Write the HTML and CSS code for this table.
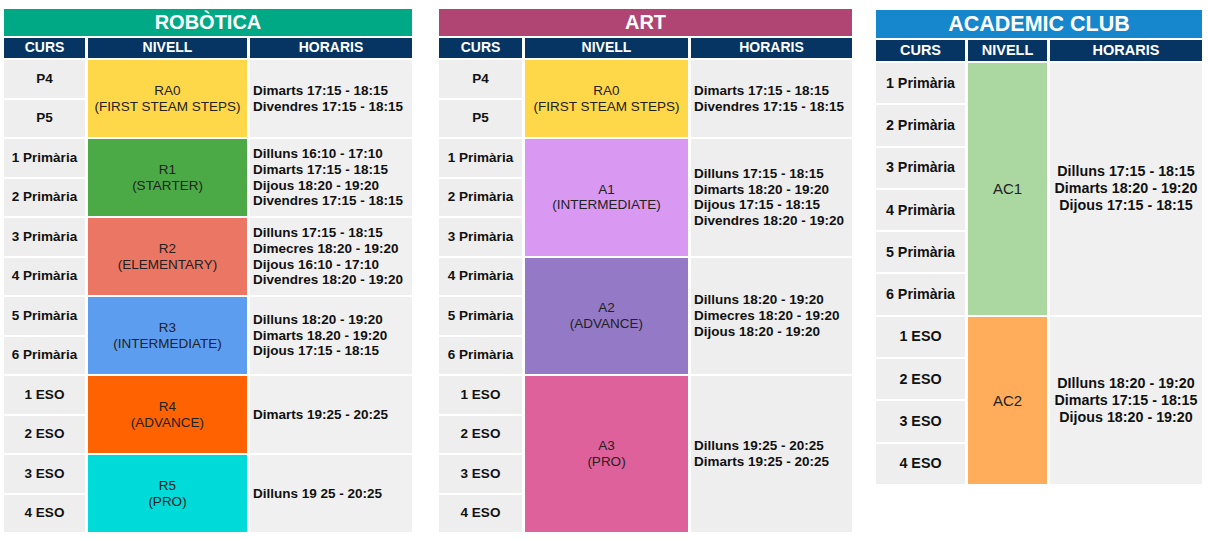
FILE: index.html
```html
<!DOCTYPE html>
<html lang="ca">
<head>
  <meta charset="UTF-8">
  <title>Horaris extraescolars</title>
  <link rel="stylesheet" href="styles.css">
</head>
<body>
  <div class="pagina">

    <!-- ROBÒTICA -->
    <section class="quadre robotica">
      <h2 class="titol">ROBÒTICA</h2>
      <div class="graella">
        <div class="cap">CURS</div>
        <div class="cap">NIVELL</div>
        <div class="cap">HORARIS</div>

        <div class="curs">P4</div>
        <div class="nivell span-2 groc">RA0<br>(FIRST STEAM STEPS)</div>
        <div class="horaris span-2">Dimarts 17:15 - 18:15<br>Divendres 17:15 - 18:15</div>
        <div class="curs">P5</div>

        <div class="curs">1 Primària</div>
        <div class="nivell span-2 verd">R1<br>(STARTER)</div>
        <div class="horaris span-2">Dilluns 16:10 - 17:10<br>Dimarts 17:15 - 18:15<br>Dijous 18:20 - 19:20<br>Divendres 17:15 - 18:15</div>
        <div class="curs">2 Primària</div>

        <div class="curs">3 Primària</div>
        <div class="nivell span-2 salmo">R2<br>(ELEMENTARY)</div>
        <div class="horaris span-2">Dilluns 17:15 - 18:15<br>Dimecres 18:20 - 19:20<br>Dijous 16:10 - 17:10<br>Divendres 18:20 - 19:20</div>
        <div class="curs">4 Primària</div>

        <div class="curs">5 Primària</div>
        <div class="nivell span-2 blau">R3<br>(INTERMEDIATE)</div>
        <div class="horaris span-2">Dilluns 18:20 - 19:20<br>Dimarts 18.20 - 19:20<br>Dijous 17:15 - 18:15</div>
        <div class="curs">6 Primària</div>

        <div class="curs">1 ESO</div>
        <div class="nivell span-2 taronja">R4<br>(ADVANCE)</div>
        <div class="horaris span-2">Dimarts 19:25 - 20:25</div>
        <div class="curs">2 ESO</div>

        <div class="curs">3 ESO</div>
        <div class="nivell span-2 cian">R5<br>(PRO)</div>
        <div class="horaris span-2">Dilluns 19 25 - 20:25</div>
        <div class="curs">4 ESO</div>
      </div>
    </section>

    <!-- ART -->
    <section class="quadre art">
      <h2 class="titol">ART</h2>
      <div class="graella">
        <div class="cap">CURS</div>
        <div class="cap">NIVELL</div>
        <div class="cap">HORARIS</div>

        <div class="curs">P4</div>
        <div class="nivell span-2 groc">RA0<br>(FIRST STEAM STEPS)</div>
        <div class="horaris span-2">Dimarts 17:15 - 18:15<br>Divendres 17:15 - 18:15</div>
        <div class="curs">P5</div>

        <div class="curs">1 Primària</div>
        <div class="nivell span-3 lila">A1<br>(INTERMEDIATE)</div>
        <div class="horaris span-3">Dilluns 17:15 - 18:15<br>Dimarts 18:20 - 19:20<br>Dijous 17:15 - 18:15<br>Divendres 18:20 - 19:20</div>
        <div class="curs">2 Primària</div>
        <div class="curs">3 Primària</div>

        <div class="curs">4 Primària</div>
        <div class="nivell span-3 morat">A2<br>(ADVANCE)</div>
        <div class="horaris span-3">Dilluns 18:20 - 19:20<br>Dimecres 18:20 - 19:20<br>Dijous 18:20 - 19:20</div>
        <div class="curs">5 Primària</div>
        <div class="curs">6 Primària</div>

        <div class="curs">1 ESO</div>
        <div class="nivell span-4 rosa">A3<br>(PRO)</div>
        <div class="horaris span-4">Dilluns 19:25 - 20:25<br>Dimarts 19:25 - 20:25</div>
        <div class="curs">2 ESO</div>
        <div class="curs">3 ESO</div>
        <div class="curs">4 ESO</div>
      </div>
    </section>

    <!-- ACADEMIC CLUB -->
    <section class="quadre academic">
      <h2 class="titol">ACADEMIC CLUB</h2>
      <div class="graella">
        <div class="cap">CURS</div>
        <div class="cap">NIVELL</div>
        <div class="cap">HORARIS</div>

        <div class="curs">1 Primària</div>
        <div class="nivell span-6 verd-clar">AC1</div>
        <div class="horaris span-6">Dilluns 17:15 - 18:15<br>Dimarts 18:20 - 19:20<br>Dijous 17:15 - 18:15</div>
        <div class="curs">2 Primària</div>
        <div class="curs">3 Primària</div>
        <div class="curs">4 Primària</div>
        <div class="curs">5 Primària</div>
        <div class="curs">6 Primària</div>

        <div class="curs">1 ESO</div>
        <div class="nivell span-4 preseg">AC2</div>
        <div class="horaris span-4">DIlluns 18:20 - 19:20<br>Dimarts 17:15 - 18:15<br>Dijous 18:20 - 19:20</div>
        <div class="curs">2 ESO</div>
        <div class="curs">3 ESO</div>
        <div class="curs">4 ESO</div>
      </div>
    </section>

  </div>
</body>
</html>
```

FILE: styles.css
```css
body {
  margin: 0;
  background-color: #ffffff;
  font-family: 'Liberation Sans', Arial, sans-serif;
  color: #111111;
}

.pagina {
  display: flex;
  align-items: flex-start;
  padding: 9px 0 0 4px;
}

.quadre {
  display: flex;
  flex-direction: column;
  gap: 2px;
}

.titol {
  margin: 0;
  height: 27px;
  display: flex;
  align-items: center;
  justify-content: center;
  color: #ffffff;
  font-size: 20px;
  font-weight: bold;
}

.graella {
  display: grid;
  column-gap: 3px;
  row-gap: 2px;
  font-size: 13.5px;
  line-height: 15.6px;
}

.cap {
  background-color: #063563;
  color: #ffffff;
  font-weight: bold;
  font-size: 14px;
  display: flex;
  align-items: center;
  justify-content: center;
}

.curs {
  grid-column: 1;
  background-color: #eeeeee;
  font-weight: bold;
  display: flex;
  align-items: center;
  justify-content: center;
}

.nivell {
  grid-column: 2;
  display: flex;
  align-items: center;
  justify-content: center;
  text-align: center;
  color: #222222;
}

.horaris {
  grid-column: 3;
  background-color: #f0f0f0;
  font-weight: bold;
  display: flex;
  align-items: center;
  padding-left: 3px;
}

.span-2 { grid-row: span 2; }
.span-3 { grid-row: span 3; }
.span-4 { grid-row: span 4; }
.span-6 { grid-row: span 6; }

/* taules */
.robotica {
  width: 408px;
}

.robotica .titol {
  background-color: #00a986;
}

.robotica .graella {
  grid-template-columns: 81px 159px 1fr;
  grid-template-rows: 20px repeat(12, 37.5px);
}

.art {
  width: 413px;
  margin-left: 27px;
}

.art .titol {
  background-color: #b04473;
}

.art .graella {
  grid-template-columns: 83px 163px 1fr;
  grid-template-rows: 20px repeat(12, 37.5px);
}

.art .horaris {
  background-color: #eeeeee;
}

.academic {
  width: 326px;
  margin-left: 24px;
  margin-top: 1px;
}

.academic .titol {
  height: 28px;
  font-size: 21.5px;
  background-color: #1787cd;
}

.academic .graella {
  grid-template-columns: 89px 79px 1fr;
  grid-template-rows: 21px repeat(10, 40.3px);
  font-size: 14.3px;
  line-height: 17px;
}

.academic .cap {
  font-size: 14.5px;
}

.academic .nivell {
  font-size: 15px;
}

.academic .horaris {
  justify-content: center;
  text-align: center;
  padding-left: 0;
}

/* colors dels nivells */
.groc { background-color: #ffd84a; }
.verd { background-color: #4caa46; }
.salmo { background-color: #ea7663; }
.blau { background-color: #5c9df0; }
.taronja { background-color: #ff6200; }
.cian { background-color: #00dad8; }
.lila { background-color: #d999f3; }
.morat { background-color: #9479c7; }
.rosa { background-color: #de619b; }
.verd-clar { background-color: #abd8a1; }
.preseg { background-color: #ffac5b; }
```
